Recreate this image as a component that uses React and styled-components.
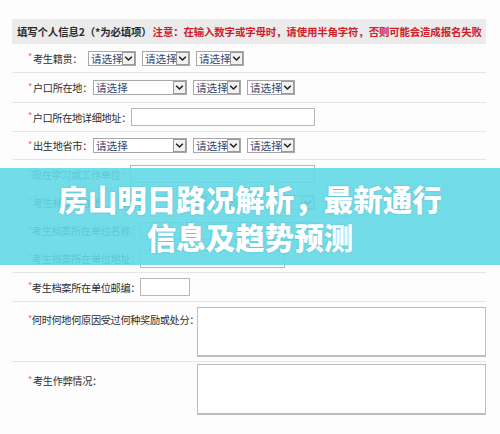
import React from "react";
import styled, { createGlobalStyle } from "styled-components";

const GlobalStyle = createGlobalStyle`
  html, body { margin: 0; padding: 0; background: #fdfdfd; }
  body { font-family: "Noto Sans CJK SC", "Noto Sans", sans-serif; }
  * { box-sizing: border-box; }
`;

const Page = styled.div`
  position: relative;
  width: 500px;
  height: 434px;
  overflow: hidden;
  background: #fdfdfd;
  padding: 19px 14px 0 12px;
`;

const Header = styled.div`
  height: 25px;
  background: #ebebeb;
  display: flex;
  align-items: center;
  padding-left: 5px;
  font-size: 10.45px;
  font-weight: 700;
  color: #2a2a2a;
  white-space: nowrap;
  letter-spacing: -0.15px;
`;

const Warn = styled.span`
  color: #d0202a;
  margin-left: 1px;
`;

const Row = styled.div`
  height: ${(p) => p.$h}px;
  display: flex;
  align-items: ${(p) => (p.$top ? "flex-start" : "center")};
  padding-top: ${(p) => (p.$top ? p.$pt : 0)}px;
  padding-left: 16px;
  border-bottom: ${(p) => (p.$last ? "none" : "1px solid #e6e6e6")};
`;

const Label = styled.span`
  display: inline-flex;
  align-items: center;
  font-size: 10.2px;
  letter-spacing: -0.35px;
  color: #2e2e2e;
  white-space: nowrap;
  width: ${(p) => p.$w}px;
  flex-shrink: 0;
  margin-top: ${(p) => p.$mt || 0}px;
`;

const Star = styled.span`
  color: #d86a7a;
  font-size: 9px;
  width: 5px;
  margin-top: -3px;
`;

const Selects = styled.div`
  display: flex;
  gap: 6px;
`;

const SelectBox = styled.div`
  width: ${(p) => p.$w}px;
  height: 15px;
  border: 1px solid #a8a8a8;
  background: #fff;
  display: flex;
  align-items: stretch;
`;

const SelectText = styled.span`
  flex: 1;
  font-size: 10.6px;
  line-height: 13px;
  color: #34466e;
  padding-left: 2px;
  white-space: nowrap;
  overflow: hidden;
`;

const ArrowBox = styled.span`
  width: 13px;
  border: 1px solid #9a9a9a;
  background: #f2f2f2;
  display: flex;
  align-items: center;
  justify-content: center;
`;

const TextInput = styled.div`
  width: ${(p) => p.$w}px;
  height: 18px;
  border: 1px solid #b8b8b8;
  background: #fff;
`;

const TextArea = styled.div`
  width: ${(p) => p.$w}px;
  height: ${(p) => p.$h}px;
  border: 1px solid #bdbdbd;
  border-bottom-width: 2px;
  background: #fff;
`;

const Overlay = styled.div`
  position: absolute;
  left: 0;
  top: 168px;
  width: 500px;
  height: 97px;
  background: rgba(100, 216, 231, 0.9);
  display: flex;
  flex-direction: column;
  align-items: center;
  justify-content: center;
  color: #fff;
  font-size: 29.5px;
  font-weight: 900;
  line-height: 38px;
  text-align: center;
  text-shadow: 0 0 2px rgba(40, 120, 140, 0.35);
  padding-top: 1px;
`;

const Arrow = () => (
  <svg width="9" height="7" viewBox="0 0 9 7">
    <path d="M1.2 1.8 L4.5 5 L7.8 1.8" fill="none" stroke="#222" strokeWidth="1.6" />
  </svg>
);

const Select = ({ w }) => (
  <SelectBox $w={w}>
    <SelectText>请选择</SelectText>
    <ArrowBox>
      <Arrow />
    </ArrowBox>
  </SelectBox>
);

const L = ({ children, w, mt }) => (
  <Label $w={w} $mt={mt}>
    <Star>*</Star>
    {children}
  </Label>
);

export default function App() {
  return (
    <>
      <GlobalStyle />
      <Page>
        <Header>
          填写个人信息2（*为必填项）
          <Warn>注意：在输入数字或字母时，请使用半角字符，否则可能会造成报名失败</Warn>
        </Header>
        <Row $h={29}>
          <L w={60}>考生籍贯：</L>
          <Selects>
            <Select w={48} />
            <Select w={48} />
            <Select w={48} />
          </Selects>
        </Row>
        <Row $h={30}>
          <L w={65}>户口所在地：</L>
          <Selects>
            <Select w={94} />
            <Select w={48} />
            <Select w={48} />
          </Selects>
        </Row>
        <Row $h={29}>
          <L w={103}>户口所在地详细地址：</L>
          <TextInput $w={184} />
        </Row>
        <Row $h={28}>
          <L w={65}>出生地省市：</L>
          <Selects>
            <Select w={94} />
            <Select w={48} />
            <Select w={48} />
          </Selects>
        </Row>
        <Row $h={29}>
          <L w={102}>现在学习或工作单位：</L>
          <TextInput $w={185} />
        </Row>
        <Row $h={28}>
          <L w={85}>考生档案所在地：</L>
          <Selects>
            <Select w={94} />
            <Select w={102} />
          </Selects>
        </Row>
        <Row $h={28}>
          <L w={112}>考生档案所在单位名称：</L>
          <TextInput $w={175} />
        </Row>
        <Row $h={28}>
          <L w={112}>考生档案所在单位地址：</L>
          <TextInput $w={145} />
        </Row>
        <Row $h={29}>
          <L w={112}>考生档案所在单位邮编：</L>
          <TextInput $w={50} />
        </Row>
        <Row $h={60} $top $pt={5}>
          <L w={169} mt={5}>何时何地何原因受过何种奖励或处分：</L>
          <TextArea $w={293} $h={50} />
        </Row>
        <Row $h={58} $top $pt={2} $last>
          <L w={169} mt={9}>考生作弊情况：</L>
          <TextArea $w={293} $h={51} />
        </Row>
        <Overlay>
          <div>房山明日路况解析，最新通行</div>
          <div>信息及趋势预测</div>
        </Overlay>
      </Page>
    </>
  );
}
